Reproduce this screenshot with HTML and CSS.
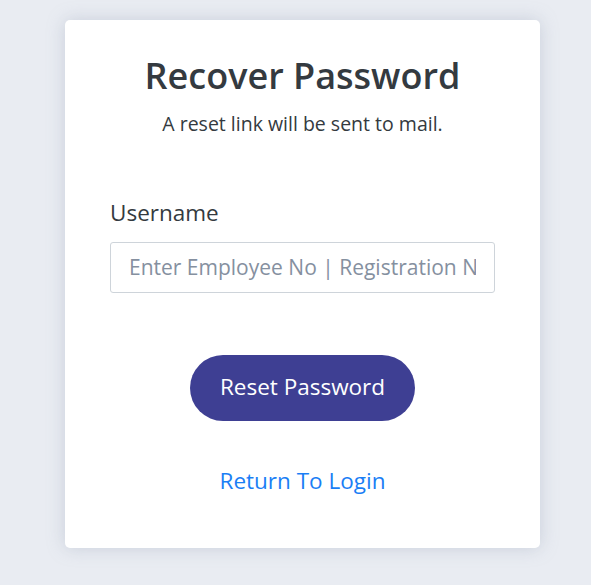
FILE: index.html
```html
<!DOCTYPE html>
<html lang="en">
<head>
<meta charset="utf-8">
<title>Recover Password</title>
<link rel="stylesheet" href="styles.css">
</head>
<body>
<main class="page">
  <section class="card">
    <h1 class="title">Recover Password</h1>
    <p class="subtitle">A reset link will be sent to mail.</p>
    <form class="form">
      <label class="label" for="username">Username</label>
      <input class="input" id="username" type="text" placeholder="Enter Employee No | Registration No">
      <div class="actions">
        <button class="btn" type="button">Reset Password</button>
      </div>
      <div class="links">
        <a class="link" href="#">Return To Login</a>
      </div>
    </form>
  </section>
</main>
</body>
</html>
```
FILE: styles.css
```css
* { box-sizing: border-box; }
html, body { margin: 0; padding: 0; }
body {
  background: #e9ecf2;
  font-family: "Open Sans", "Noto Sans", sans-serif;
  color: #343a40;
  width: 591px;
  height: 585px;
  overflow: hidden;
}
.page {
  padding: 20px 0 0 65px;
}
.card {
  width: 475px;
  height: 528px;
  background: #fff;
  border-radius: 5px;
  box-shadow: 0 0 18px rgba(140, 152, 175, 0.35);
  padding: 31px 45px 0;
  text-align: center;
}
.title {
  margin: 0;
  font-size: 36px;
  font-weight: 600;
  line-height: 50px;
  color: #343a40;
}
.subtitle {
  margin: 10px 0 0;
  font-size: 19.5px;
  line-height: 26px;
  color: #343a40;
}
.form {
  margin-top: 61px;
  text-align: left;
}
.label {
  display: block;
  font-size: 22.5px;
  line-height: 30px;
  color: #343a40;
  margin-bottom: 14px;
}
.input {
  display: block;
  width: 385px;
  height: 51px;
  border: 1px solid #ced4da;
  border-radius: 3px;
  padding: 0 18px 1px;
  font-family: inherit;
  font-size: 21px;
  color: #495057;
  outline: none;
}
.input::placeholder { color: #8590a0; }
.actions {
  margin-top: 62px;
  display: flex;
  justify-content: center;
}
.btn {
  width: 225px;
  height: 66px;
  border: none;
  border-radius: 33px;
  background: #3e3f93;
  color: #fff;
  font-family: inherit;
  font-size: 22.5px;
  padding: 0 0 3px;
}
.links {
  margin-top: 45px;
  text-align: center;
}
.link {
  font-size: 22.5px;
  line-height: 30px;
  color: #1a7ef5;
  text-decoration: none;
}
```
